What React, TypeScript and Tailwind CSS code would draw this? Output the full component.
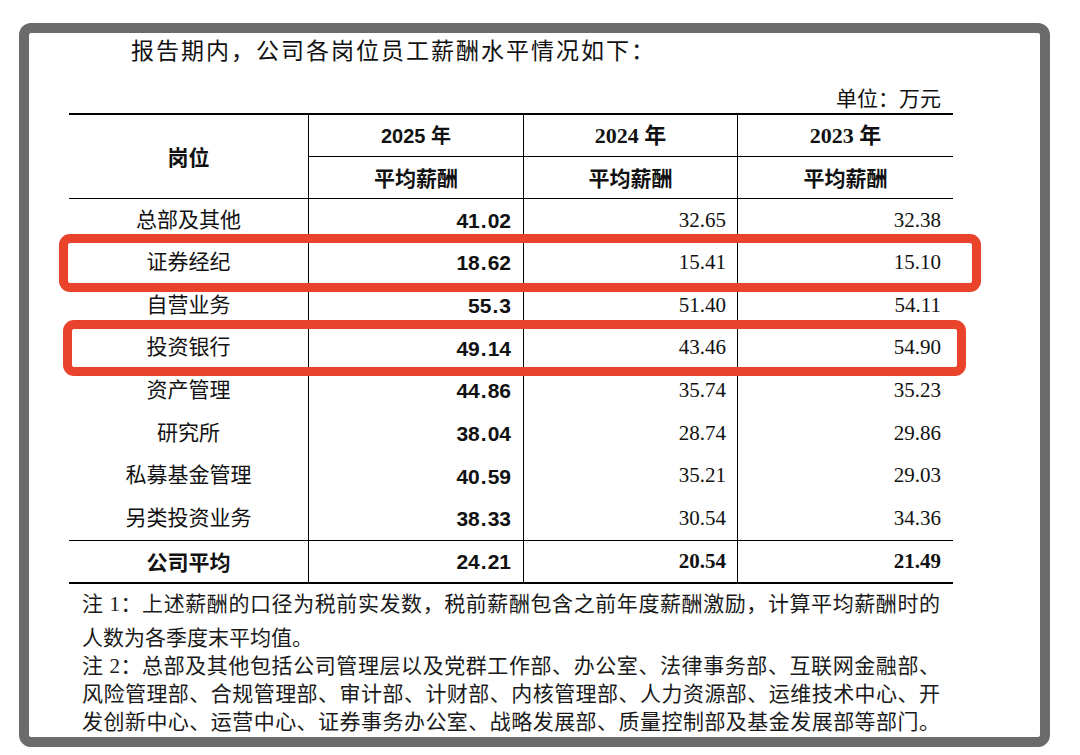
import React from "react";

const rows: { name: string; a: string; b: string; c: string }[] = [
  { name: "总部及其他", a: "41.02", b: "32.65", c: "32.38" },
  { name: "证券经纪", a: "18.62", b: "15.41", c: "15.10" },
  { name: "自营业务", a: "55.3", b: "51.40", c: "54.11" },
  { name: "投资银行", a: "49.14", b: "43.46", c: "54.90" },
  { name: "资产管理", a: "44.86", b: "35.74", c: "35.23" },
  { name: "研究所", a: "38.04", b: "28.74", c: "29.86" },
  { name: "私募基金管理", a: "40.59", b: "35.21", c: "29.03" },
  { name: "另类投资业务", a: "38.33", b: "30.54", c: "34.36" },
];

function SansNum({ v }: { v: string }) {
  const parts = v.split(".");
  return (
    <span className="font-['Liberation_Sans','Noto_Sans_CJK_SC',sans-serif] font-bold text-[21px] leading-none">
      {parts[0]}
      {parts.length > 1 ? <span className="mx-[1px]">.</span> : null}
      {parts[1]}
    </span>
  );
}

export default function App() {
  return (
    <div className="relative w-[1080px] h-[755px] bg-white overflow-hidden text-[#111] font-['Liberation_Serif','Noto_Sans_CJK_SC',serif]">
      <div className="ml-[19px] mt-[23px] w-[1031px] h-[724px] border-[10px] border-[#6b6b6b] rounded-[12px] bg-white">
        {/* Title */}
        <div className="h-[38px] flex items-center pl-[102px] text-[23px] tracking-[2px] leading-[28px]">
          报告期内，公司各岗位员工薪酬水平情况如下：
        </div>
        {/* Unit */}
        <div className="ml-[40px] w-[884px] h-[42px] pt-[14px] pr-[12px] flex justify-end text-[21px] leading-[28px]">
          单位：万元
        </div>
        {/* Table */}
        <div className="ml-[40px] w-[884px] border-t-2 border-b-2 border-black">
          {/* Header */}
          <div className="flex h-[84px] border-b border-black">
            <div className="w-[240px] border-r border-black flex items-center justify-center font-['Noto_Sans_CJK_SC',sans-serif] font-bold text-[21px]">
              岗位
            </div>
            <div className="w-[215px] border-r border-black flex flex-col">
              <div className="h-[42px] border-b border-black flex items-center justify-center font-['Liberation_Sans','Noto_Sans_CJK_SC',sans-serif] font-bold text-[20px]">
                2025 年
              </div>
              <div className="flex-1 flex items-center justify-center font-['Noto_Sans_CJK_SC',sans-serif] font-bold text-[21px]">
                平均薪酬
              </div>
            </div>
            <div className="w-[214px] border-r border-black flex flex-col">
              <div className="h-[42px] border-b border-black flex items-center justify-center font-bold text-[22px]">
                2024 年
              </div>
              <div className="flex-1 flex items-center justify-center font-['Noto_Sans_CJK_SC',sans-serif] font-bold text-[21px]">
                平均薪酬
              </div>
            </div>
            <div className="flex-1 flex flex-col">
              <div className="h-[42px] border-b border-black flex items-center justify-center font-bold text-[22px]">
                2023 年
              </div>
              <div className="flex-1 flex items-center justify-center font-['Noto_Sans_CJK_SC',sans-serif] font-bold text-[21px]">
                平均薪酬
              </div>
            </div>
          </div>
          {/* Body */}
          {rows.map((r) => (
            <div key={r.name} className="flex h-[42.625px]">
              <div className="w-[240px] border-r border-black flex items-center justify-center text-[21px]">
                {r.name}
              </div>
              <div className="w-[215px] border-r border-black flex items-center justify-end pr-[12px]">
                <SansNum v={r.a} />
              </div>
              <div className="w-[214px] border-r border-black flex items-center justify-end pr-[11px] text-[21px]">
                {r.b}
              </div>
              <div className="flex-1 flex items-center justify-end pr-[12px] text-[21px]">
                {r.c}
              </div>
            </div>
          ))}
          {/* Average */}
          <div className="flex h-[42px] border-t border-black">
            <div className="w-[240px] border-r border-black flex items-center justify-center font-['Noto_Sans_CJK_SC',sans-serif] font-bold text-[21px]">
              公司平均
            </div>
            <div className="w-[215px] border-r border-black flex items-center justify-end pr-[12px]">
              <SansNum v="24.21" />
            </div>
            <div className="w-[214px] border-r border-black flex items-center justify-end pr-[11px] text-[21px] font-bold">
              20.54
            </div>
            <div className="flex-1 flex items-center justify-end pr-[12px] text-[21px] font-bold">
              21.49
            </div>
          </div>
        </div>
        {/* Notes */}
        <div className="ml-[53px] w-[858px] mt-[6px] text-[21px] leading-[28px] text-[#1a1a1a]">
          <div className="text-justify [text-align-last:justify]">
            注 1：上述薪酬的口径为税前实发数，税前薪酬包含之前年度薪酬激励，计算平均薪酬时的
          </div>
          <div className="mt-[6px]">人数为各季度末平均值。</div>
          <div className="text-justify [text-align-last:justify]">
            注 2：总部及其他包括公司管理层以及党群工作部、办公室、法律事务部、互联网金融部、
          </div>
          <div className="text-justify [text-align-last:justify]">
            风险管理部、合规管理部、审计部、计财部、内核管理部、人力资源部、运维技术中心、开
          </div>
          <div className="text-justify [text-align-last:justify]">
            发创新中心、运营中心、证券事务办公室、战略发展部、质量控制部及基金发展部等部门。
          </div>
        </div>
      </div>

      {/* Red highlight boxes */}
      <div className="absolute left-[59px] top-[234px] w-[922px] h-[58px] border-[9px] border-[#e9432b] rounded-[11px] pointer-events-none" />
      <div className="absolute left-[63px] top-[320px] w-[903px] h-[56px] border-[9px] border-[#e9432b] rounded-[11px] pointer-events-none" />
    </div>
  );
}
